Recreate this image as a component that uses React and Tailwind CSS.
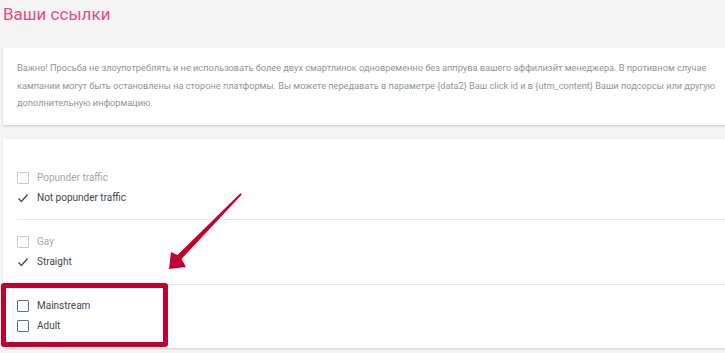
import React from 'react';

const notice =
  'Важно! Просьба не злоупотреблять и не использовать более двух смартлинок одновременно без аппрува вашего аффилиэйт менеджера. В противном случае кампании могут быть остановлены на стороне платформы. Вы можете передавать в параметре {data2} Ваш click id и в {utm_content} Ваши подсорсы или другую дополнительную информацию.';

function Box({ dark }) {
  return (
    <span
      className={
        'w-[12px] h-[12px] shrink-0 rounded-[1px] border ' +
        (dark ? 'border-[#5c7080]' : 'border-[#c3c9ce]')
      }
    />
  );
}

function Check() {
  return (
    <svg width="12" height="12" viewBox="0 0 12 12" className="shrink-0">
      <path d="M1.5 6.5 L4.5 9.5 L10.5 2.5" fill="none" stroke="#3d4a55" strokeWidth="1.3" />
    </svg>
  );
}

function Row({ kind, label }) {
  return (
    <div className="flex items-center gap-[8px] h-[20px]">
      {kind === 'check' ? <Check /> : <Box dark={kind === 'dark'} />}
      <span
        className={
          'text-[10px] ' + (kind === 'off' ? 'text-[#a3a8ad]' : 'text-[#40474d]')
        }
      >
        {label}
      </span>
    </div>
  );
}

export default function App() {
  return (
    <div
      className="relative w-[725px] h-[353px] overflow-hidden bg-[#f5f5f5]"
      style={{ fontFamily: 'Roboto, "Noto Sans", sans-serif' }}
    >
      <h1 className="pl-[3px] pt-[3px] text-[17px] leading-[22px] text-[#ec4a7b]">Ваши ссылки</h1>

      {/* предупреждение */}
      <div className="ml-[3px] mt-[23px] w-[740px] bg-white shadow-[0_1px_2px_rgba(0,0,0,0.18)] pl-[14px] pr-[20px] pt-[11px] pb-[13px]">
        <p className="text-[9.2px] leading-[17.5px] text-[#8f959a]">{notice}</p>
      </div>

      {/* фильтры */}
      <div className="ml-[3px] mt-[14px] w-[740px] bg-white shadow-[0_1px_2px_rgba(0,0,0,0.12)] pl-[14px]">
        <div className="pt-[29px] pb-[11px] border-b border-[#e6e6e6]">
          <Row kind="off" label="Popunder traffic" />
          <Row kind="check" label="Not popunder traffic" />
        </div>
        <div className="pt-[12px] pb-[12px] border-b border-[#e6e6e6]">
          <Row kind="off" label="Gay" />
          <Row kind="check" label="Straight" />
        </div>
        <div className="pt-[11px] pb-[12px]">
          <Row kind="dark" label="Mainstream" />
          <Row kind="dark" label="Adult" />
        </div>
      </div>

      {/* аннотация */}
      <div className="absolute left-[1px] top-[283px] w-[167px] h-[64px] border-[5px] border-[#c2002f] rounded-[3px]" />
      <svg className="absolute left-0 top-0" width="725" height="353">
        <polygon
          points="169,269 186,267 181.5,259 241.8,194.6 240.4,193.2 177.5,255 171,252"
          fill="#c2002f"
        />
      </svg>
    </div>
  );
}
